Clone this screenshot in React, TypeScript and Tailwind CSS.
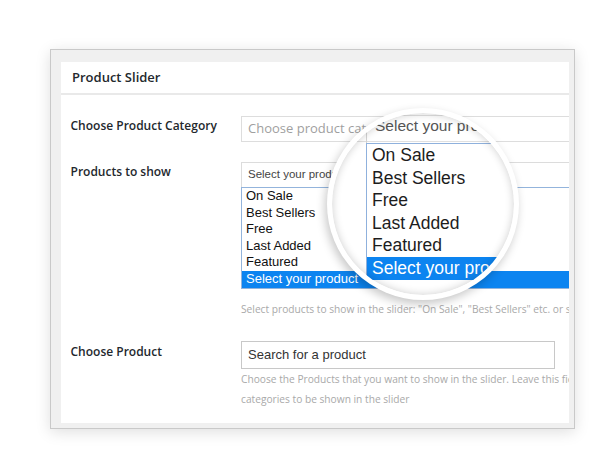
import React from "react";

const OPEN = { fontFamily: '"Open Sans", "Liberation Sans", sans-serif' };
const ARIAL = { fontFamily: '"Liberation Sans", Arial, sans-serif' };

const items = ["On Sale", "Best Sellers", "Free", "Last Added", "Featured"];

function Lens() {
  return (
    <div className="absolute left-[327px] top-[108px] w-[192px] h-[192px] rounded-full bg-white p-[5px] shadow-[-2px_4px_10px_rgba(0,0,0,0.22)]">
      <div className="relative w-full h-full rounded-full overflow-hidden bg-white">
        <div className="absolute left-0 right-0 top-[2px] h-px bg-[#e0e0e0]" />
        <div className="absolute left-0 right-0 top-[28px] h-px bg-[#e0e0e0]" />
        <div className="absolute left-[34px] top-[-4px] w-[300px]">
          <div
            className="h-[34px] border-l border-[#d4d4d4] flex items-center pl-[8px] text-[15.5px] text-[#555] whitespace-nowrap"
            style={ARIAL}
          >
            Select your product
          </div>
          <div className="border-t border-l border-[#8fb1dd]" style={ARIAL}>
            {items.map((t) => (
              <div
                key={t}
                className="h-[22.6px] leading-[22.6px] pl-[5px] text-[17.5px] text-[#1d1d1d] whitespace-nowrap"
              >
                {t}
              </div>
            ))}
            <div className="h-[22.6px] leading-[22.6px] pl-[5px] text-[17.5px] text-white bg-[#0c84f0] whitespace-nowrap">
              Select your product
            </div>
          </div>
        </div>
        <div className="absolute inset-0 rounded-full shadow-[inset_0_0_8px_rgba(0,0,0,0.2)]" />
      </div>
    </div>
  );
}

export default function App() {
  return (
    <div className="relative w-[600px] h-[471px] bg-white overflow-hidden pt-[49px] pl-[50px]">
      <div className="w-[525px] h-[380px] border border-[#c9c9c9] bg-[#f0f0f0] pt-[12px] pl-[10px] pr-[5px] pb-[5px] shadow-[0_3px_14px_rgba(0,0,0,0.13)]">
        <div className="w-full h-full bg-white overflow-hidden">
          <div
            className="h-[33px] border-b-2 border-[#e9e9e9] flex items-center pl-[11px] text-[13px] font-semibold text-[#23282d]"
            style={OPEN}
          >
            Product Slider
          </div>

          <div className="flex mt-[21px]">
            <div
              className="w-[180px] shrink-0 pl-[9.5px] text-[12px] leading-[20px] font-semibold text-[#23282d]"
              style={OPEN}
            >
              Choose Product Category
            </div>
            <div
              className="w-[360px] shrink-0 h-[26px] border border-[#dddddd] flex items-center px-[6px] text-[13px] text-[#9f9f9f] whitespace-nowrap"
              style={OPEN}
            >
              Choose product category
            </div>
          </div>

          <div className="flex mt-[20px]">
            <div
              className="w-[180px] shrink-0 pl-[9.5px] text-[12px] leading-[20px] font-semibold text-[#23282d]"
              style={OPEN}
            >
              Products to show
            </div>
            <div className="w-[360px] shrink-0">
              <div
                className="h-[25px] border border-b-0 border-[#dcdcdc] flex items-center pl-[6px] text-[11.5px] text-[#444] whitespace-nowrap"
                style={ARIAL}
              >
                Select your product
              </div>
              <div className="border border-[#93b4dc]" style={ARIAL}>
                {items.map((t) => (
                  <div
                    key={t}
                    className="h-[16.6px] leading-[16.6px] pl-[4px] text-[13px] text-[#111] whitespace-nowrap"
                  >
                    {t}
                  </div>
                ))}
                <div className="h-[16.6px] leading-[16.6px] pl-[4px] text-[13px] text-white bg-[#0c84f0] whitespace-nowrap">
                  Select your product
                </div>
              </div>
              <div
                className="mt-[10px] text-[10.2px] leading-[20px] text-[#a9a9a9] whitespace-nowrap"
                style={OPEN}
              >
                Select products to show in the slider: "On Sale", "Best Sellers" etc. or select your product
              </div>
            </div>
          </div>

          <div className="flex mt-[22px]">
            <div
              className="w-[180px] shrink-0 pl-[9.5px] pt-[1px] text-[12px] leading-[20px] font-semibold text-[#23282d]"
              style={OPEN}
            >
              Choose Product
            </div>
            <div className="w-[360px] shrink-0">
              <div
                className="w-[314px] h-[28px] border border-[#c8c8c8] flex items-center pl-[6px] text-[13px] text-[#333]"
                style={ARIAL}
              >
                Search for a product
              </div>
              <div
                className="text-[10.2px] leading-[20px] text-[#a9a9a9] whitespace-nowrap"
                style={OPEN}
              >
                <div>Choose the Products that you want to show in the slider. Leave this field empty to show all products from the selected</div>
                <div>categories to be shown in the slider</div>
              </div>
            </div>
          </div>
        </div>
      </div>
      <Lens />
    </div>
  );
}
